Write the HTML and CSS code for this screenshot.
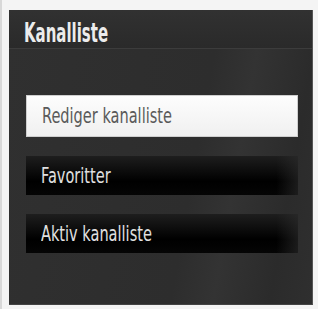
FILE: index.html
```html
<!DOCTYPE html>
<html lang="no">
<head>
<meta charset="UTF-8">
<title>Kanalliste</title>
<link rel="stylesheet" href="styles.css">
</head>
<body>
	<div class="frame">
		<div class="panel">
			<!-- Title bar -->
			<div class="title"><span class="narrow">Kanalliste</span></div>
			<!-- Menu entries -->
			<div class="menu">
				<div class="item active"><span class="narrow">Rediger kanalliste</span></div>
				<div class="item"><span class="narrow">Favoritter</span></div>
				<div class="item"><span class="narrow">Aktiv kanalliste</span></div>
			</div>
		</div>
	</div>
</body>
</html>
```
FILE: styles.css
```css
* {
	box-sizing: border-box;
}

body {
	margin: 0;
	width: 318px;
	height: 309px;
	background: #f4f4f4;
	font-family: "DejaVu Sans Condensed", "DejaVu Sans", sans-serif;
}

/* Light outer frame around the dark panel */
.frame {
	padding: 10px 5px 4px 7px;
	height: 100%;
	border-left: 2px solid #d8d8d8;
}

.panel {
	height: 100%;
	background: linear-gradient(100deg, #303030 0%, #2d2d2d 60%, #333 72%, #2b2b2b 88%, #2f2f2f 100%);
	border-right: 1px solid #555;
	border-bottom: 1px solid #444;
}

/* Squeeze the text to mimic the TV's condensed menu font */
.narrow {
	display: inline-block;
	white-space: nowrap;
	transform-origin: left center;
}

.title {
	height: 39px;
	padding: 4px 0 0 15px;
	line-height: 38px;
	color: #ececec;
	font-size: 26px;
	font-weight: bold;
	border-bottom: 1px solid #3c3c3c;
	background: linear-gradient(#313131, #2a2a2a);
}

.title .narrow {
	transform: scaleX(0.64);
}

.menu {
	display: flex;
	flex-direction: column;
	gap: 19px;
	padding: 46px 14px 0 17px;
}

.item {
	height: 39px;
	display: flex;
	align-items: center;
	padding-left: 15px;
	font-size: 21px;
	color: #e0e0e0;
	background: linear-gradient(90deg, rgba(0,0,0,0) 92%, rgba(45,45,45,0.6) 100%), linear-gradient(#1e1e1e, #000 65%, #050505);
}

.item .narrow {
	transform: scaleX(0.77);
}

.item.active {
	height: 42px;
	color: #5a5a5a;
	background: linear-gradient(#fdfdfd, #f0f0f0);
	border: 1px solid #cfcfcf;
}
```
